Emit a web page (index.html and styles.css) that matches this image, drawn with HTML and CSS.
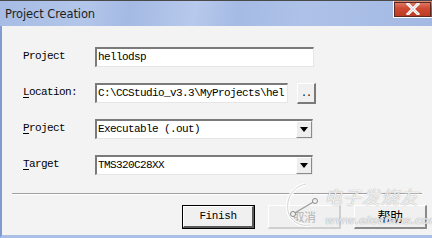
FILE: index.html
```html
<!DOCTYPE html>
<html>
<head>
<meta charset="utf-8">
<link rel="stylesheet" href="styles.css">
</head>
<body>
<div class="window">
  <div class="titlebar">
    <span class="title">Project Creation</span>
    <div class="close">
      <svg width="16" height="12" viewBox="0 0 16 12"><path d="M3 1 L13 11 M13 1 L3 11" stroke="#ffffff" stroke-width="3" stroke-linecap="square"/><path d="M3 1 L13 11 M13 1 L3 11" stroke="#8a8a8a" stroke-width="0.6" opacity="0.5"/></svg>
    </div>
  </div>
  <div class="body">
    <div class="form">
      <div class="row">
        <span class="label">Project</span>
        <div class="field wide">hellodsp</div>
      </div>
      <div class="row">
        <span class="label"><u>L</u>ocation:</span>
        <div class="field loc">C:\CCStudio_v3.3\MyProjects\hel</div>
        <div class="browse">..</div>
      </div>
      <div class="row">
        <span class="label"><u>P</u>roject</span>
        <div class="field combo"><span class="ctext">Executable (.out)</span><span class="arrow"><svg width="8" height="5" viewBox="0 0 8 5"><path d="M0 0 H8 L4 5 Z" fill="#000"/></svg></span></div>
      </div>
      <div class="row">
        <span class="label"><u>T</u>arget</span>
        <div class="field combo"><span class="ctext">TMS320C28XX</span><span class="arrow"><svg width="8" height="5" viewBox="0 0 8 5"><path d="M0 0 H8 L4 5 Z" fill="#000"/></svg></span></div>
      </div>
    </div>
    <div class="sep"></div>
    <div class="buttons">
      <div class="btn default">Finish</div>
      <div class="btn faded">取消</div>
      <div class="btn">帮助</div>
    </div>
    <div class="watermark">
      <svg class="wm-logo" width="40" height="48" viewBox="0 0 40 48"><path d="M22 3 C8 6 2 18 4 30 C6 40 16 46 26 44" fill="none" stroke="#ffffff" stroke-width="3.5" opacity="0.9"/><path d="M22 3 C8 6 2 18 4 30 C6 40 16 46 26 44" fill="none" stroke="#c8c8c8" stroke-width="0.8"/><path d="M9 33 L31 20" stroke="#9a9a9a" stroke-width="1.2"/><circle cx="9" cy="33" r="2.5" fill="#f3f3f3" stroke="#8a8a8a" stroke-width="1"/><circle cx="31" cy="20" r="2.5" fill="#f3f3f3" stroke="#8a8a8a" stroke-width="1"/></svg>
      <span class="wm-cn">电子发烧友</span>
      <span class="wm-url">www.elecfans.com</span>
    </div>
  </div>
</div>
</body>
</html>
```
FILE: styles.css
```css
html, body {
  margin: 0;
  padding: 0;
}
body {
  width: 432px;
  height: 238px;
  overflow: hidden;
  background: #f3f3f3;
}
.window {
  width: 432px;
  height: 238px;
  display: flex;
  flex-direction: column;
  box-sizing: border-box;
  overflow: hidden;
}
.titlebar {
  height: 26px;
  flex: none;
  box-sizing: border-box;
  border-top: 1px solid #4a4a4a;
  background: linear-gradient(100deg, #a6bce4 0%, #b3c6ea 20%, #a4bae3 30%, #b7c9ec 45%, #a5bbe4 55%, #aec2e8 70%, #a3b9e3 100%);
  display: flex;
  align-items: flex-start;
  justify-content: space-between;
}
.title {
  font-family: "DejaVu Sans", sans-serif;
  font-size: 11.5px;
  color: #1e1e1e;
  margin: 6px 0 0 5px;
  letter-spacing: -0.1px;
}
.close {
  width: 39px;
  height: 17px;
  box-sizing: border-box;
  border: 1px solid #ffffff;
  border-top: none;
  border-right: none;
  outline: 1px solid #5a2a22;
  outline-offset: -2px;
  background: linear-gradient(180deg, #e08a78 0%, #cf4a32 45%, #b83a22 100%);
  display: flex;
  align-items: center;
  justify-content: center;
}
.body {
  flex: 1;
  min-height: 0;
  position: relative;
  overflow: hidden;
  background: #f3f3f3;
  border-left: 2px solid #7e9cd2;
  border-bottom: 3px solid #a9bfe6;
  display: flex;
  flex-direction: column;
}
.form {
  padding: 21px 0 0 21px;
  display: flex;
  flex-direction: column;
  gap: 16px;
}
.row {
  display: flex;
  align-items: center;
  height: 20px;
}
.label {
  width: 72px;
  font-family: "Liberation Mono", monospace;
  font-size: 11px;
  letter-spacing: -0.6px;
  color: #000;
  margin-top: -2px;
}
.label u {
  text-decoration-thickness: 1px;
  text-underline-offset: 2px;
}
.field {
  height: 20px;
  box-sizing: border-box;
  background: #ffffff;
  border-style: solid;
  border-width: 2px 1px 1px 2px;
  border-color: #7a7a7a #e6e6e6 #e6e6e6 #7a7a7a;
  font-family: "Liberation Mono", monospace;
  font-size: 11px;
  letter-spacing: -0.6px;
  color: #000;
  padding-left: 1px;
  line-height: 17px;
  white-space: nowrap;
  overflow: hidden;
}
.wide {
  width: 219px;
}
.loc {
  width: 193px;
}
.browse {
  margin-left: 9px;
  width: 19px;
  height: 21px;
  box-sizing: border-box;
  background: #f0f0f0;
  border-style: solid;
  border-width: 1px 2px 2px 1px;
  border-color: #ffffff #7a7a7a #7a7a7a #ffffff;
  font-family: "Liberation Mono", monospace;
  font-size: 10px;
  line-height: 20px;
  text-align: center;
  letter-spacing: -1px;
  color: #000;
}
.combo {
  width: 218px;
  display: flex;
  align-items: center;
  justify-content: space-between;
  padding-left: 1px;
}
.ctext {
  line-height: 17px;
}
.arrow {
  width: 16px;
  height: 17px;
  box-sizing: border-box;
  background: #eeeeee;
  border-style: solid;
  border-width: 1px;
  border-color: #ffffff #8a8a8a #8a8a8a #ffffff;
  display: flex;
  align-items: center;
  justify-content: center;
}
.sep {
  margin: 18px 10px 0 10px;
  height: 0;
  border-top: 1px solid #a0a0a0;
  border-bottom: 1px solid #ffffff;
}
.buttons {
  display: flex;
  justify-content: flex-end;
  gap: 13px;
  padding: 10px 5px 0 0;
}
.btn {
  width: 73px;
  height: 24px;
  box-sizing: border-box;
  background: #f0f0f0;
  border-style: solid;
  border-width: 1px 2px 2px 1px;
  border-color: #ffffff #8a8a8a #8a8a8a #ffffff;
  font-family: "Liberation Mono", "Noto Sans CJK SC", monospace;
  font-size: 11px;
  letter-spacing: -0.4px;
  line-height: 21px;
  text-align: center;
  color: #000;
}
.btn.default {
  outline: 1px solid #000;
  outline-offset: -1px;
  border-color: #ffffff #5a5a5a #5a5a5a #ffffff;
  border-width: 2px 3px 3px 2px;
  line-height: 19px;
}
.btn.faded {
  color: #b4b4b4;
  border-color: #ffffff #cfcfcf #cfcfcf #ffffff;
  font-family: "Noto Sans CJK SC", sans-serif;
  font-size: 12px;
}
.btn:last-child {
  font-family: "Noto Sans CJK SC", sans-serif;
  font-size: 13px;
  line-height: 20px;
}
.watermark {
  position: absolute;
  left: 278px;
  top: 155px;
  width: 150px;
  height: 52px;
  pointer-events: none;
}
.wm-logo {
  position: absolute;
  left: 4px;
  top: 0;
}
.wm-cn {
  position: absolute;
  left: 44px;
  top: 5px;
  font-family: "Noto Sans CJK SC", sans-serif;
  font-size: 18px;
  line-height: 20px;
  font-style: italic;
  letter-spacing: 1px;
  color: rgba(255, 255, 255, 0.85);
  text-shadow: 0 0 1px rgba(120, 120, 120, 0.8);
}
.wm-url {
  position: absolute;
  left: 45px;
  top: 34px;
  font-family: "DejaVu Sans", sans-serif;
  font-size: 11px;
  line-height: 12px;
  font-style: italic;
  font-weight: bold;
  color: rgba(255, 255, 255, 0.75);
  text-shadow: 0 0 1px rgba(120, 120, 120, 0.8);
}
```
